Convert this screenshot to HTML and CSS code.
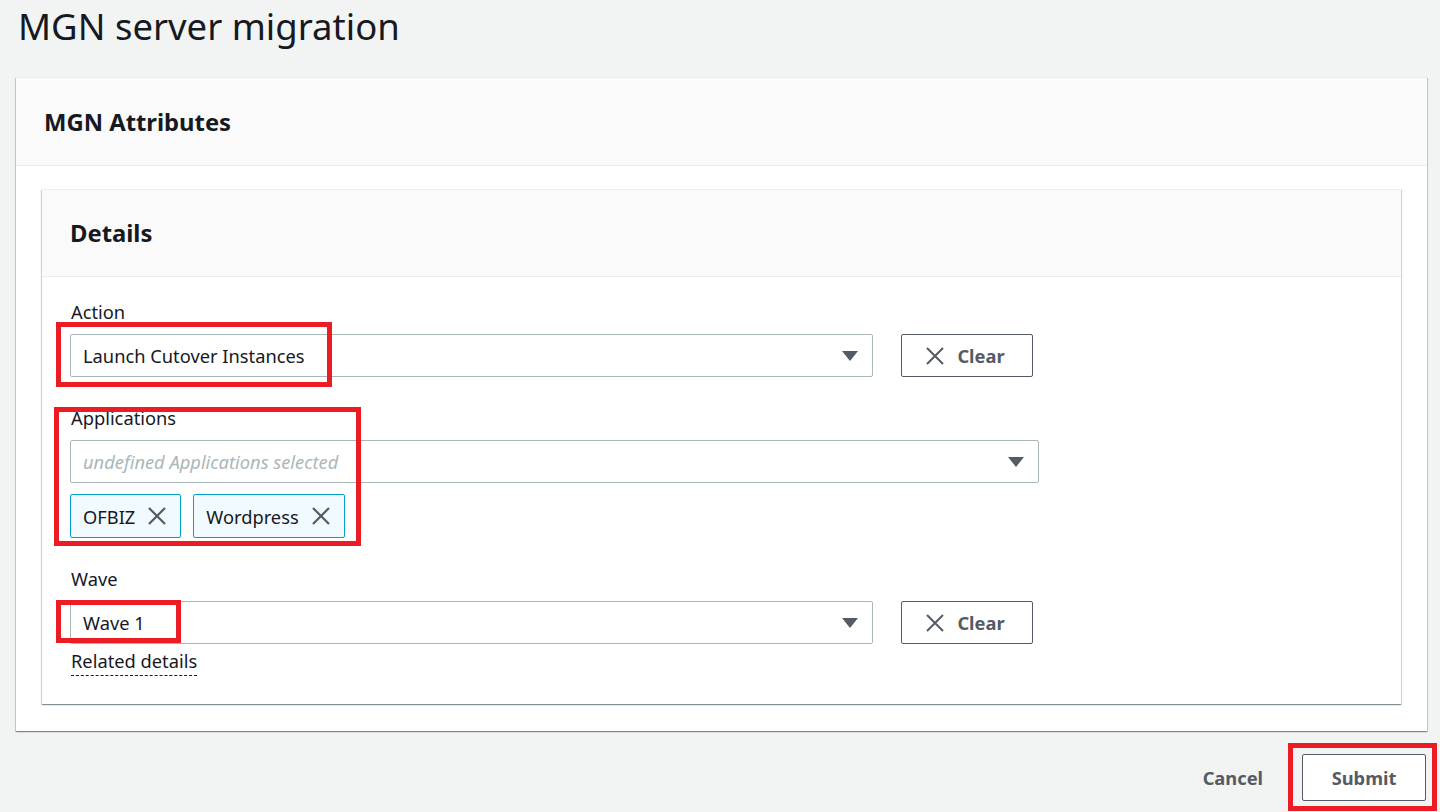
FILE: index.html
```html
<!DOCTYPE html>
<html lang="en">
<head>
    <meta charset="UTF-8">
    <meta name="viewport" content="width=device-width, initial-scale=1.0">
    <title>MGN server migration</title>
    <link rel="stylesheet" href="styles.css">
</head>
<body>
    <h1 class="page-title">MGN server migration</h1>

    <!-- Outer container -->
    <div class="container">
        <div class="container-header">
            <h2>MGN Attributes</h2>
        </div>
        <div class="container-body">

            <!-- Inner details container -->
            <div class="container inner">
                <div class="container-header inner-header">
                    <h2>Details</h2>
                </div>
                <div class="form-body">

                    <!-- Action -->
                    <div class="field">
                        <label>Action</label>
                        <div class="field-row">
                            <div class="select short">
                                <span>Launch Cutover Instances</span>
                                <span class="caret"></span>
                            </div>
                            <button class="btn">
                                <svg width="20" height="20" viewBox="0 0 20 20"><path d="M2 2 L18 18 M18 2 L2 18" stroke="#545b64" stroke-width="2" fill="none"/></svg>
                                Clear
                            </button>
                        </div>
                    </div>

                    <!-- Applications -->
                    <div class="field">
                        <label>Applications</label>
                        <div class="select wide">
                            <span class="placeholder">undefined Applications selected</span>
                            <span class="caret"></span>
                        </div>
                        <div class="tokens">
                            <div class="token">OFBIZ
                                <svg width="20" height="20" viewBox="0 0 20 20"><path d="M2 2 L18 18 M18 2 L2 18" stroke="#545b64" stroke-width="2.2" fill="none"/></svg>
                            </div>
                            <div class="token">Wordpress
                                <svg width="20" height="20" viewBox="0 0 20 20"><path d="M2 2 L18 18 M18 2 L2 18" stroke="#545b64" stroke-width="2.2" fill="none"/></svg>
                            </div>
                        </div>
                    </div>

                    <!-- Wave -->
                    <div class="field last">
                        <label>Wave</label>
                        <div class="field-row">
                            <div class="select short">
                                <span>Wave 1</span>
                                <span class="caret"></span>
                            </div>
                            <button class="btn">
                                <svg width="20" height="20" viewBox="0 0 20 20"><path d="M2 2 L18 18 M18 2 L2 18" stroke="#545b64" stroke-width="2" fill="none"/></svg>
                                Clear
                            </button>
                        </div>
                        <span class="related">Related details</span>
                    </div>

                </div>
            </div>
        </div>
    </div>

    <!-- Form actions -->
    <div class="actions">
        <button class="link-btn">Cancel</button>
        <button class="btn submit">Submit</button>
    </div>

    <!-- Red annotation boxes drawn over the screenshot -->
    <div class="mark mark-action"></div>
    <div class="mark mark-apps"></div>
    <div class="mark mark-wave"></div>
    <div class="mark mark-submit"></div>
</body>
</html>
```

FILE: styles.css
```css
/* Page base */
body {
    font-family: "Noto Sans", "Open Sans", Arial, sans-serif;
    background-color: #f2f3f3;
    color: #16191f;
    margin: 0;
    padding: 0 13px 0 16px;
    position: relative;
    height: 812px;
    overflow: hidden;
}

.page-title {
    font-size: 36.5px;
    font-weight: 400;
    line-height: 44px;
    margin: 0;
    padding: 4px 0 0 2px;
    height: 77px;
    box-sizing: border-box;
}

/* Containers */
.container {
    background-color: white;
    border-top: 1px solid #eaeded;
    box-shadow: 0 1px 1px 0 rgba(0, 28, 36, 0.3), 1px 1px 1px 0 rgba(0, 28, 36, 0.15), -1px 1px 1px 0 rgba(0, 28, 36, 0.15);
}

.container-header {
    background-color: #fafafa;
    border-bottom: 1px solid #eaeded;
    height: 88px;
    box-sizing: border-box;
    display: flex;
    align-items: center;
    padding: 0 28px;
}

.container-header h2 {
    font-size: 23.8px;
    font-weight: 700;
    margin: 0;
}

.container-body {
    padding: 23px 26px 27px 26px;
}

.inner-header {
    height: 87px;
    padding: 0 28px;
}

.form-body {
    padding: 24px 28px 28px 28px;
}

/* Fields */
.field {
    margin-bottom: 30px;
}

.field.last {
    margin-bottom: 0;
}

label {
    display: block;
    font-size: 18.3px;
    line-height: 22px;
    margin-bottom: 11px;
    padding-left: 1px;
}

.field-row {
    display: flex;
    align-items: center;
    gap: 28px;
}

.select {
    height: 43px;
    box-sizing: border-box;
    border: 1px solid #aab7b8;
    border-radius: 2px;
    display: flex;
    align-items: center;
    justify-content: space-between;
    padding: 0 14px 0 12px;
    font-size: 18.3px;
}

.select.short {
    width: 803px;
}

.select.wide {
    width: 969px;
}

.placeholder {
    color: #aab7b8;
    font-style: italic;
}

.caret {
    width: 0;
    height: 0;
    border-left: 8px solid transparent;
    border-right: 8px solid transparent;
    border-top: 10px solid #545b64;
}

/* Buttons */
.btn {
    font-family: inherit;
    height: 43px;
    width: 132px;
    box-sizing: border-box;
    border: 1px solid #545b64;
    border-radius: 2px;
    background-color: white;
    color: #545b64;
    font-size: 18.3px;
    font-weight: 700;
    display: flex;
    align-items: center;
    justify-content: center;
    gap: 12px;
    padding: 0 4px 0 0;
    cursor: pointer;
}

.link-btn {
    font-family: inherit;
    background: none;
    border: none;
    color: #545b64;
    font-size: 18.3px;
    font-weight: 700;
    cursor: pointer;
    padding: 0;
}

/* Tokens */
.tokens {
    display: flex;
    gap: 12px;
    margin-top: 11px;
}

.token {
    height: 44px;
    box-sizing: border-box;
    border: 1px solid #00a1c9;
    border-radius: 2px;
    background-color: #f1faff;
    display: flex;
    align-items: center;
    gap: 12px;
    padding: 0 13px 0 12px;
    font-size: 18.3px;
}

/* Related details link */
.related {
    display: inline-block;
    font-size: 18.3px;
    line-height: 22px;
    margin: 6px 0 0 1px;
    padding-bottom: 3px;
    border-bottom: 1px dashed #16191f;
}

/* Footer actions */
.actions {
    display: flex;
    justify-content: flex-end;
    align-items: center;
    gap: 39px;
    margin-top: 23px;
    padding-right: 1px;
}

.submit {
    width: 124px;
    height: 47px;
    padding: 0;
}

/* Red annotation boxes */
.mark {
    position: absolute;
    border: 5px solid #ec1c24;
    box-sizing: border-box;
}

.mark-action {
    left: 56px;
    top: 322px;
    width: 276px;
    height: 65px;
}

.mark-apps {
    left: 54px;
    top: 407px;
    width: 307px;
    height: 139px;
}

.mark-wave {
    left: 56px;
    top: 600px;
    width: 125px;
    height: 43px;
}

.mark-submit {
    left: 1288px;
    top: 743px;
    width: 149px;
    height: 68px;
}
```
